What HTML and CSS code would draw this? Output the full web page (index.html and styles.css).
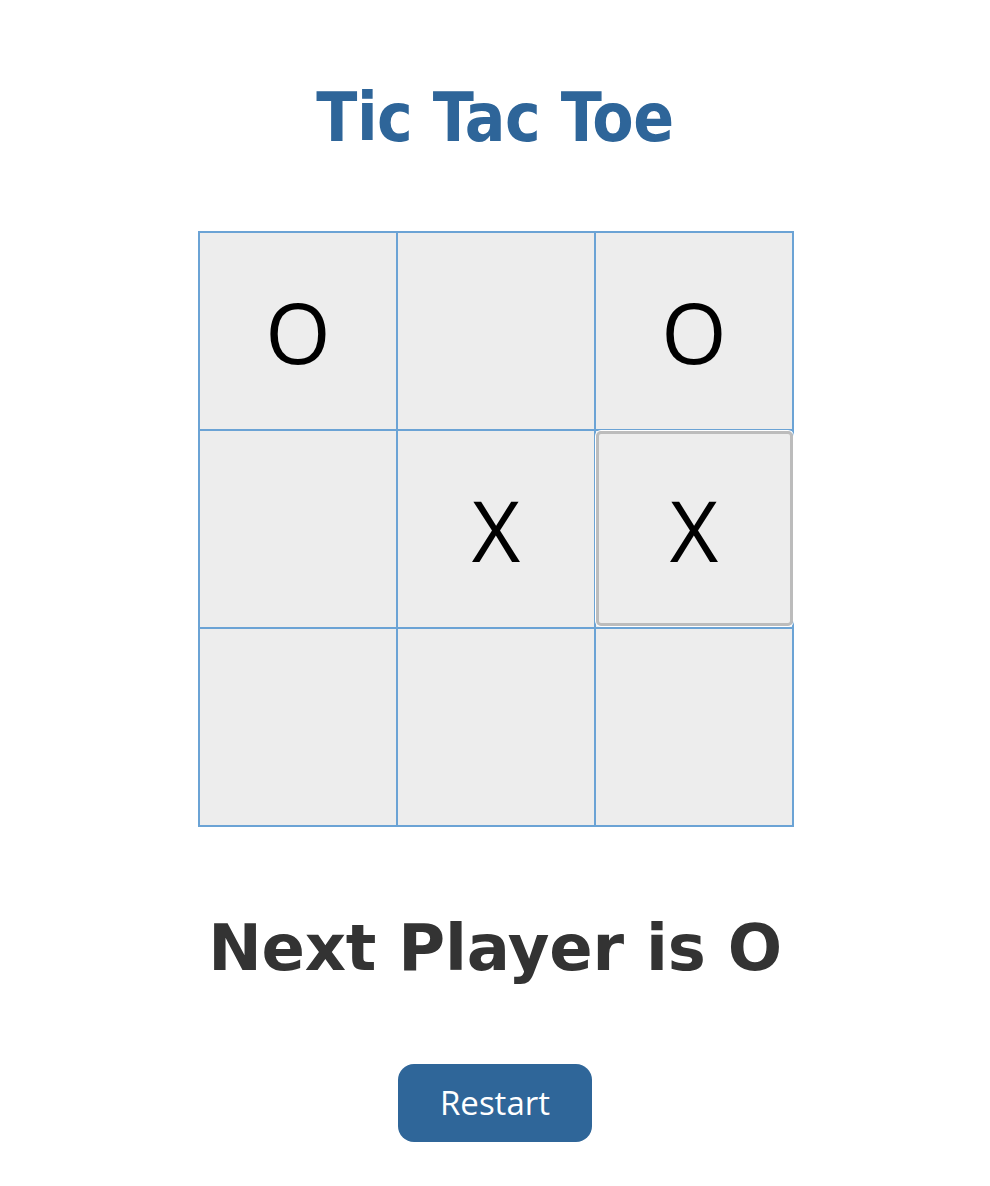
FILE: index.html
```html
<!DOCTYPE html>
<html lang="en">
<head>
<meta charset="utf-8">
<title>Tic Tac Toe</title>
<link rel="stylesheet" href="styles.css">
</head>
<body>
<main class="game">
  <h1 class="title">Tic Tac Toe</h1>
  <div class="board">
    <button class="cell">O</button>
    <button class="cell"></button>
    <button class="cell">O</button>
    <button class="cell"></button>
    <button class="cell">X</button>
    <button class="cell focused">X</button>
    <button class="cell"></button>
    <button class="cell"></button>
    <button class="cell"></button>
  </div>
  <p class="status">Next Player is O</p>
  <button class="restart">Restart</button>
</main>
</body>
</html>
```

FILE: styles.css
```css
html, body {
  margin: 0;
  padding: 0;
  background: #ffffff;
}

.game {
  display: flex;
  flex-direction: column;
  align-items: center;
  padding-top: 78px;
}

.title {
  margin: 0;
  font-family: "DejaVu Sans Condensed", "DejaVu Sans", sans-serif;
  font-weight: bold;
  font-size: 67px;
  line-height: 80px;
  letter-spacing: -0.5px;
  color: #2e6599;
}

.board {
  margin-top: 73px;
  margin-left: 2px;
  display: grid;
  grid-template-columns: repeat(3, 198px);
  grid-template-rows: repeat(3, 198px);
  border: 1px solid #6ba3d5;
}

.cell {
  position: relative;
  margin: 0;
  padding: 0;
  border: 1px solid #6ba3d5;
  background: #ededed;
  font-family: "Open Sans", sans-serif;
  font-size: 84px;
  color: #000000;
  display: flex;
  align-items: center;
  justify-content: center;
  outline: none;
}

.cell.focused::after {
  content: "";
  position: absolute;
  top: 0;
  left: 0;
  right: -1px;
  bottom: 1px;
  border: 3px solid #bcbcbc;
  border-radius: 5px;
  box-shadow: 0 0 0 1px #ffffff;
}

.status {
  margin: 83px 0 0 0;
  font-family: "DejaVu Sans", sans-serif;
  font-weight: bold;
  font-size: 64px;
  line-height: 76px;
  letter-spacing: -0.2px;
  color: #333333;
}

.restart {
  margin-top: 78px;
  width: 194px;
  height: 78px;
  border: none;
  border-radius: 16px;
  background: #2f6699;
  color: #ffffff;
  font-family: "Open Sans", sans-serif;
  font-size: 33px;
  line-height: 78px;
  padding: 0 0 2px 0;
}
```
